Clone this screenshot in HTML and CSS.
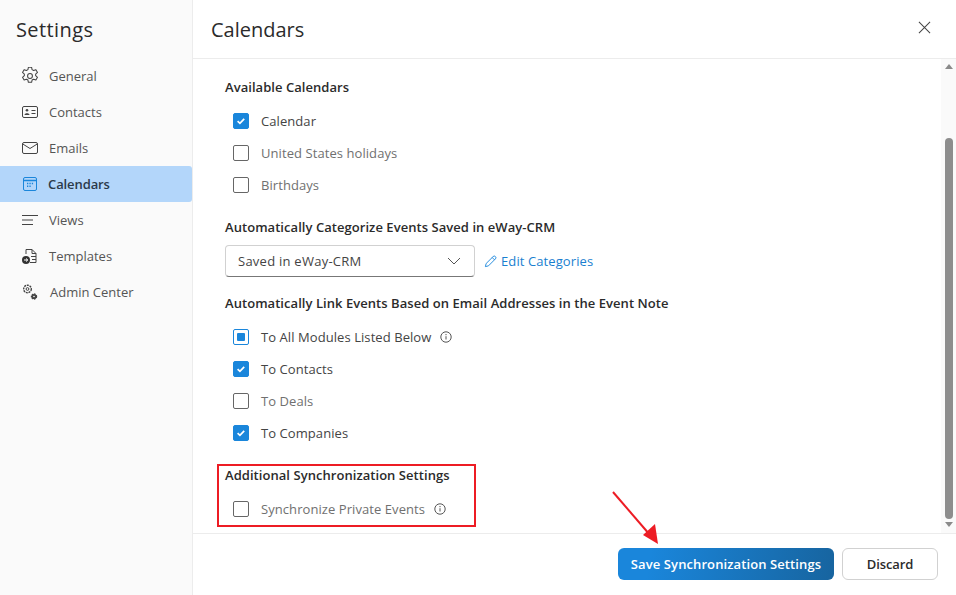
FILE: index.html
```html
<!DOCTYPE html>
<html lang="en">
<head>
<meta charset="utf-8">
<title>Settings</title>
<link rel="stylesheet" href="styles.css">
</head>
<body>
<div class="app">
  <aside class="sidebar">
    <h1 class="side-title">Settings</h1>
    <nav class="nav">
      <a class="nav-item"><svg class="nav-icon" viewBox="1.200 1.200 15.600 15.600" fill="none" stroke="#444" stroke-width=".9"><path d="M7.600 1.500h2.800l.4 2 1.300.7 2-.7 1.400 2.400-1.600 1.400v1.400l1.600 1.400-1.400 2.400-2-.7-1.300.7-.4 2H7.600l-.4-2-1.300-.7-2 .7-1.400-2.400 1.600-1.400V7.300L2.500 5.900l1.400-2.400 2 .7 1.300-.7z" stroke-linejoin="round"/><circle cx="9" cy="9" r="2.100"/></svg><span>General</span></a>
      <a class="nav-item"><svg class="nav-icon" viewBox="0 0 18 18" fill="none" stroke="#444"><rect x="1.500" y="3.500" width="15" height="11" rx="1.500"/><circle cx="6" cy="7.300" r="1.300" fill="#444" stroke="none"/><path d="M3.500 12c0-2.500 5-2.500 5 0z" fill="#444" stroke="none"/><path d="M10.500 7.500h4M10.500 10.500h4"/></svg><span>Contacts</span></a>
      <a class="nav-item"><svg class="nav-icon" viewBox="0 0 18 18" fill="none" stroke="#444"><rect x="1.500" y="3.500" width="15" height="11" rx="1.500"/><path d="M1.800 5l7.200 4.500L16.200 5"/></svg><span>Emails</span></a>
      <a class="nav-item active"><svg class="nav-icon" viewBox="0 0 18 18" fill="none" stroke="#1a86db"><rect x="2.500" y="2.500" width="13" height="13" rx="1.500"/><path d="M2.500 5.500h13" stroke-width="1.500"/><path d="M6 8.500h1.300M8.400 8.500h1.300M10.800 8.500h1.300M6 11.300h1.300M8.400 11.300h1.300" stroke-width="1.400"/></svg><span>Calendars</span></a>
      <a class="nav-item"><svg class="nav-icon" viewBox="0 0 18 18" fill="none" stroke="#444"><path d="M1 4.500h16M1 9h11M1 13.500h11"/></svg><span>Views</span></a>
      <a class="nav-item"><svg class="nav-icon" viewBox="0 0 18 18" fill="none" stroke="#444"><path d="M5 7V2.500h6l4 4v9H9"/><path d="M11 2.500v4h4M10 9.500h5M11 12.500h4" /><circle cx="5" cy="13" r="4" fill="#333" stroke="none"/><path d="M3 13h3.500M5 11.500L6.800 13 5 14.500" stroke="#fff"/></svg><span>Templates</span></a>
      <a class="nav-item"><svg class="nav-icon" viewBox="0 0 18 18" fill="none" stroke="#444"><circle cx="6.500" cy="6" r="3.800" stroke-dasharray="2 .8" stroke-width="1.400"/><circle cx="6.500" cy="6" r="1.400"/><circle cx="13" cy="13.500" r="2.600" fill="#444" stroke-dasharray="1.600 .8" stroke-width="1.200"/><circle cx="13" cy="13.500" r=".8" fill="#fff" stroke="none"/></svg><span class="nav-shift">Admin Center</span></a>
    </nav>
  </aside>
  <main class="main">
    <header class="header">
      <h2 class="title">Calendars</h2>
      <svg class="close" viewBox="0 0 14 14" fill="none" stroke="#444" stroke-width="1.100"><path d="M1 1l12 12M13 1L1 13"/></svg>
    </header>
    <div class="body">
      <div class="content">
        <section class="section">
          <h3 class="heading">Available Calendars</h3>
          <label class="row"><span class="box checked"><svg viewBox="0 0 16 16" fill="none" stroke="#fff" stroke-width="1.700"><path d="M4.600 8.200l2.300 2.200 4.300-4.600"/></svg></span><span>Calendar</span></label>
          <label class="row off"><span class="box"></span><span>United States holidays</span></label>
          <label class="row off"><span class="box"></span><span>Birthdays</span></label>
        </section>
        <section class="section">
          <h3 class="heading">Automatically Categorize Events Saved in eWay-CRM</h3>
          <div class="select-row">
            <div class="select"><span>Saved in eWay-CRM</span><svg class="chev" viewBox="0 0 14 8" fill="none" stroke="#555"><path d="M1 1l6 6 6-6"/></svg></div>
            <a class="link"><svg class="pencil" viewBox="0 0 14 14" fill="none" stroke="#1a86db"><path d="M1.500 12.500l.8-3.300L9.800 1.700a1.500 1.500 0 0 1 2.500 2.500L4.800 11.700zM8.800 2.700l2.500 2.500"/></svg>Edit Categories</a>
          </div>
        </section>
        <section class="section">
          <h3 class="heading">Automatically Link Events Based on Email Addresses in the Event Note</h3>
          <label class="row"><span class="box mixed"><i class="dot"></i></span><span>To All Modules Listed Below</span><svg class="info" viewBox="0 0 12 12" fill="none" stroke="#555"><circle cx="6" cy="6" r="5.200"/><path d="M6 5.200v3.300M6 3v1.200"/></svg></label>
          <label class="row"><span class="box checked"><svg viewBox="0 0 16 16" fill="none" stroke="#fff" stroke-width="1.700"><path d="M4.600 8.200l2.300 2.200 4.300-4.600"/></svg></span><span>To Contacts</span></label>
          <label class="row off"><span class="box"></span><span>To Deals</span></label>
          <label class="row"><span class="box checked"><svg viewBox="0 0 16 16" fill="none" stroke="#fff" stroke-width="1.700"><path d="M4.600 8.200l2.300 2.200 4.300-4.600"/></svg></span><span>To Companies</span></label>
        </section>
        <section class="section">
          <h3 class="heading">Additional Synchronization Settings</h3>
          <label class="row off"><span class="box"></span><span>Synchronize Private Events</span><svg class="info" viewBox="0 0 12 12" fill="none" stroke="#555"><circle cx="6" cy="6" r="5.200"/><path d="M6 5.200v3.300M6 3v1.200"/></svg></label>
        </section>
      </div>
      <div class="scrollbar">
        <i class="arrow up"></i>
        <div class="track"><div class="thumb"></div></div>
        <i class="arrow down"></i>
      </div>
    </div>
    <footer class="footer">
      <button class="btn primary">Save Synchronization Settings</button>
      <button class="btn">Discard</button>
    </footer>
  </main>
</div>
<div class="redbox"></div>
<svg class="redarrow" viewBox="0 0 60 70" fill="none"><path d="M1 1l37 43" stroke="#ed1c24" stroke-width="2"/><path d="M46 53L31 44l12-11z" fill="#ed1c24"/></svg>
</body>
</html>
```
FILE: styles.css
```css
* { box-sizing: border-box; }
html, body { margin: 0; height: 100%; background: #fff; }
body {
  font-family: "Open Sans", "Noto Sans", sans-serif;
  font-size: 13px;
  color: #333;
  overflow: hidden;
}
.app { display: flex; width: 956px; height: 595px; }
.sidebar {
  width: 193px;
  flex: none;
  background: #fafafa;
  border-right: 1px solid #ececec;
}
.side-title {
  margin: 0;
  height: 58px;
  padding: 15px 0 0 16px;
  font-size: 20px;
  line-height: 30px;
  font-weight: 500;
  letter-spacing: 0.4px;
  color: #2b2b2b;
}
.nav { display: flex; flex-direction: column; }
.nav-item {
  display: flex;
  align-items: center;
  gap: 10px;
  height: 36px;
  padding-left: 21px;
  color: #555;
  letter-spacing: 0;
}
.nav-item.active {
  background: #b3d6fa;
  border-radius: 0 3px 3px 0;
  color: #2b3a4a;
  font-weight: 600;
  gap: 9px;
  letter-spacing: -0.1px;
}
.nav-icon { width: 18px; height: 18px; flex: none; }
.nav-shift { margin-left: 1px; }
.main { flex: 1; min-width: 0; display: flex; flex-direction: column; }
.header {
  height: 59px;
  flex: none;
  display: flex;
  align-items: center;
  justify-content: space-between;
  padding: 0 25px 0 18px;
  border-bottom: 1px solid #ececec;
}
.title { margin: 0; font-size: 20px; font-weight: 500; color: #2b2b2b; }
.close { width: 13px; height: 13px; margin-top: -3px; }
.body { flex: 1; min-height: 0; display: flex; }
.content { flex: 1; padding: 17px 0 0 32px; display: flex; flex-direction: column; gap: 15px; }
.heading {
  margin: 0 0 7px;
  height: 22px;
  line-height: 22px;
  font-size: 13px;
  font-weight: 600;
  color: #2b2b2b;
  letter-spacing: 0.05px;
}
.row {
  display: flex;
  align-items: center;
  height: 32px;
  padding-left: 8px;
  gap: 12px;
  color: #444;
  letter-spacing: 0.07px;
}
.row.off { color: #707070; }
.box {
  width: 16px;
  height: 16px;
  flex: none;
  border: 1px solid #666;
  border-radius: 2px;
  background: #fff;
  display: flex;
  align-items: center;
  justify-content: center;
}
.box svg { width: 16px; height: 16px; flex: none; }
.box.checked { background: #1a86db; border-color: #1a86db; }
.box.mixed { border-color: #1a86db; }
.dot { width: 8px; height: 8px; border-radius: 1px; background: #1a86db; }
.info { width: 12px; height: 12px; margin-left: -3px; }
.select-row { display: flex; align-items: center; gap: 9px; }
.select {
  width: 250px;
  height: 32px;
  display: flex;
  align-items: center;
  justify-content: space-between;
  padding: 0 13px 0 12px;
  border: 1px solid #d1d1d1;
  border-bottom-color: #777;
  border-radius: 4px;
  color: #444;
  letter-spacing: 0.25px;
}
.chev { width: 14px; height: 8px; }
.link { display: flex; align-items: center; gap: 4px; color: #1a7fd0; letter-spacing: 0.1px; }
.pencil { width: 13px; height: 13px; }
.scrollbar {
  width: 15px;
  flex: none;
  background: #fafafa;
  display: flex;
  flex-direction: column;
  align-items: center;
  padding: 5px 0 6px;
}
.arrow { width: 0; height: 0; flex: none; border-left: 4.500px solid transparent; border-right: 4.500px solid transparent; }
.arrow.up { border-bottom: 5px solid #8a8a8a; }
.arrow.down { border-top: 5px solid #8a8a8a; }
.track { flex: 1; width: 8px; padding: 69px 0 3px; display: flex; }
.thumb { flex: 1; background: #8d8d8d; border-radius: 4px; }
.footer {
  height: 62px;
  flex: none;
  display: flex;
  justify-content: flex-end;
  align-items: flex-start;
  gap: 8px;
  padding: 14px 18px 0 0;
  border-top: 1px solid #ececec;
}
.btn {
  height: 32px;
  width: 96px;
  font: 600 13px "Open Sans", "Noto Sans", sans-serif;
  color: #2b2b2b;
  background: #fff;
  border: 1px solid #d1d1d1;
  border-radius: 6px;
  padding: 0;
  letter-spacing: -0.1px;
}
.btn.primary {
  width: 216px;
  color: #fff;
  border: 0;
  letter-spacing: 0.1px;
  background: linear-gradient(100deg, #1a86db 15%, #17649f 100%);
}
.redbox {
  position: absolute;
  left: 217px;
  top: 464px;
  width: 259px;
  height: 63px;
  border: 2px solid #ed1c24;
}
.redarrow {
  position: absolute;
  left: 612px;
  top: 491px;
  width: 60px;
  height: 70px;
}
```
